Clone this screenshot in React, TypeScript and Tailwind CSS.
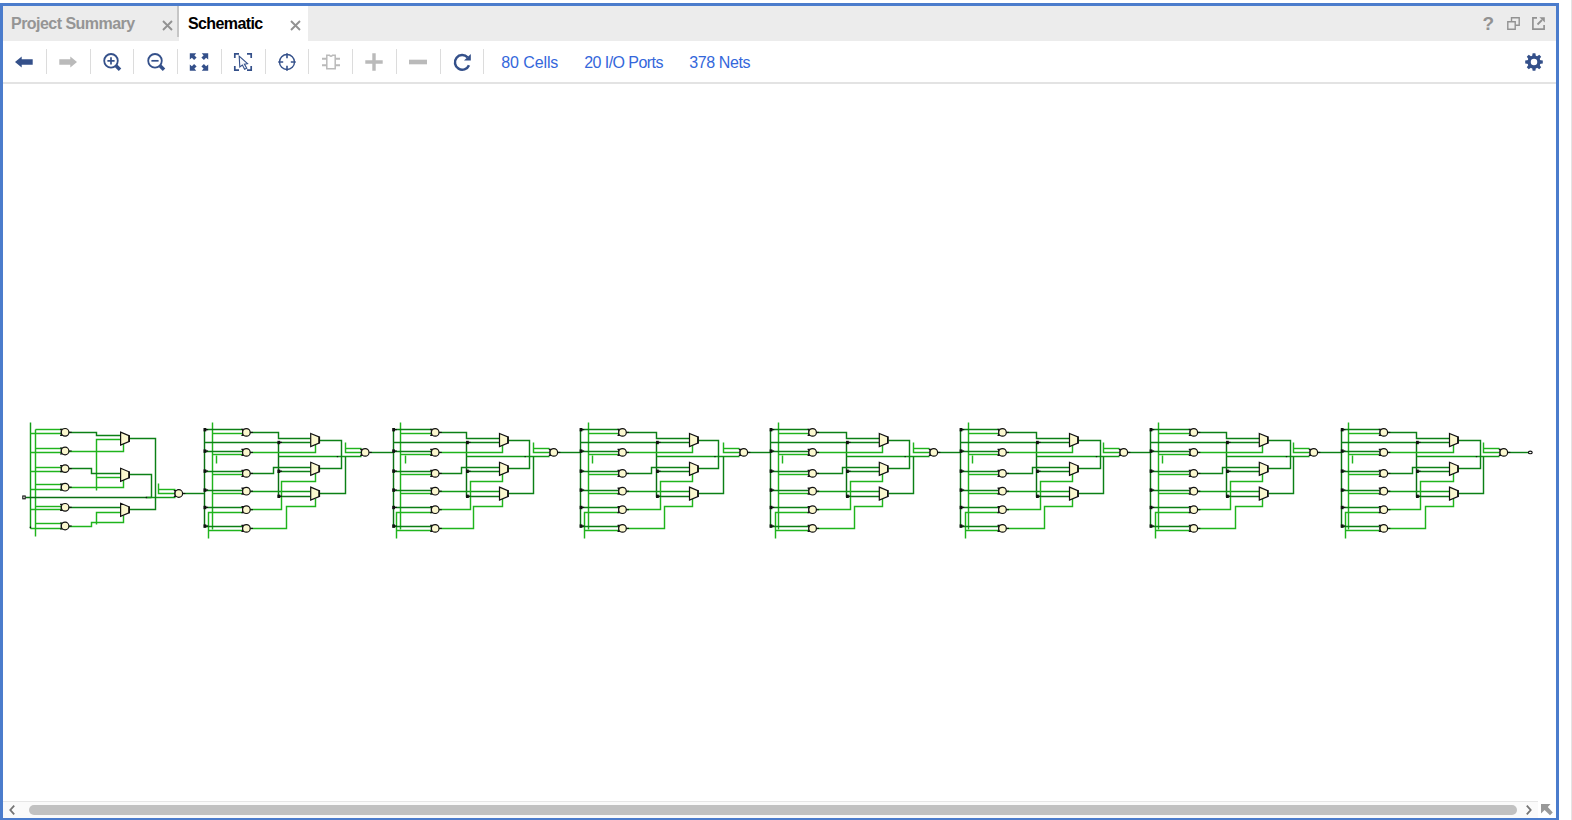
import React from "react";

const DEEP = "#0b7013";
const DARK = "#0c8016";
const MID = "#109a16";
const LITE = "#1fb41c";
const BLACK = "#111111";
const CREAM = "#fbf8cf";

type Point = [number, number];

const snap = (v: number) => Math.floor(v) + 0.5;

function Wire({ pts, color = MID, w = 1.45 }: { pts: Point[]; color?: string; w?: number }) {
  return (
    <polyline
      points={pts.map(([x, y]) => `${snap(x)},${snap(y)}`).join(" ")}
      fill="none"
      stroke={color}
      strokeWidth={w}
    />
  );
}

function Gate({ x, y, tail = true }: { x: number; y: number; tail?: boolean }) {
  return (
    <g stroke={BLACK}>
      <path d={`M${x - 5} ${y - 3}H${x - 2}M${x - 5} ${y + 3}H${x - 2}M${x - 3.8} ${y - 3}V${y + 3}`} strokeWidth="1.2" />
      <circle cx={x} cy={y} r="3.8" fill={CREAM} strokeWidth="1.2" />
      {tail && <path d={`M${x + 4} ${y}h2.6`} strokeWidth="1.1" />}
    </g>
  );
}

function Mux({ x, y }: { x: number; y: number }) {
  return (
    <g>
      <path
        d={`M${x} ${y - 6.5}L${x + 8.4} ${y - 3}V${y + 3}L${x} ${y + 6.5}Z`}
        fill={CREAM}
        stroke={BLACK}
        strokeWidth="1.2"
      />
      <path d={`M${x + 8.6} ${y - 3.4}V${y + 3.4}`} stroke={BLACK} strokeWidth="1.6" />
    </g>
  );
}

function Pin({ x, y }: { x: number; y: number }) {
  return (
    <g fill={BLACK}>
      <rect x={x - 0.4} y={y - 1.6} width="2.8" height="3.4" />
      <rect x={x + 2} y={y - 0.6} width="2.2" height="1.2" />
    </g>
  );
}

interface Stage {
  bus: number;
  rail: number;
  feed: number;
  tick: number;
  gate: number;
  mid: number;
  c3: number;
  c5: number;
  c6: number;
  mux: number;
  sel: number;
  out: number;
  stub: number;
  or: number;
}

const stages: Stage[] = [
  { bus: 204.3, rail: 212.4, feed: 208.7, tick: 216.3, gate: 246.4, mid: 278, c3: 273.7, c5: 281.3, c6: 286.6, mux: 310.4, sel: 315.3, out: 341.3, stub: 345.3, or: 365.2 },
  { bus: 393, rail: 400.3, feed: 396.6, tick: 405, gate: 435.2, mid: 466.6, c3: 461.6, c5: 470.3, c6: 473.7, mux: 499.2, sel: 502.6, out: 529, stub: 533.7, or: 553.8 },
  { bus: 580.4, rail: 588.6, feed: 584, tick: 592.4, gate: 622.5, mid: 656.6, c3: 651.6, c5: 660.3, c6: 664, mux: 689.2, sel: 692.6, out: 718.8, stub: 723.7, or: 743.8 },
  { bus: 770.4, rail: 778.6, feed: 775, tick: 782.6, gate: 812.6, mid: 846.6, c3: 842.6, c5: 850.3, c6: 854, mux: 879, sel: 882.6, out: 909, stub: 913.7, or: 933.8 },
  { bus: 960.4, rail: 968.6, feed: 965, tick: 972.4, gate: 1002.5, mid: 1036.6, c3: 1032.6, c5: 1040.3, c6: 1044, mux: 1069.2, sel: 1072.6, out: 1100.3, stub: 1103.7, or: 1123.8 },
  { bus: 1150.4, rail: 1158.6, feed: 1155, tick: 1162.6, gate: 1193.8, mid: 1226.6, c3: 1222.6, c5: 1230.3, c6: 1235.3, mux: 1259, sel: 1262.6, out: 1290.3, stub: 1293.7, or: 1313.8 },
  { bus: 1341.6, rail: 1348.6, feed: 1345, tick: 1352.4, gate: 1383.8, mid: 1416.6, c3: 1412.6, c5: 1420.3, c6: 1425.3, mux: 1449.2, sel: 1453.8, out: 1480.3, stub: 1483.7, or: 1503.8 },
];

function StageView({ s, next }: { s: Stage; next: number }) {
  const g = s.gate;
  return (
    <g>
      <Wire pts={[[s.bus, 429], [s.bus, 527]]} color={DEEP} />
      <Wire pts={[[s.rail, 422], [s.rail, 529]]} color={LITE} />
      <Wire pts={[[s.feed, 538], [s.feed, 512], [g - 4, 512]]} color={LITE} />
      <Wire pts={[[s.feed, 530], [g - 4, 530]]} color={LITE} />
      <Wire pts={[[s.tick, 455], [s.tick, 463]]} color={LITE} />
      {[429, 451, 471, 490, 507, 526].map((y) => (
        <Wire key={y} pts={[[s.bus, y], [g - 4, y]]} color={DARK} />
      ))}
      {[433, 454, 474, 493].map((y) => (
        <Wire key={y} pts={[[s.rail, y], [g - 4, y]]} color={LITE} />
      ))}
      <Wire pts={[[s.bus, 442], [s.mux, 442]]} color={DARK} />
      <Wire pts={[[g, 432], [s.mid, 432], [s.mid, 438], [s.mux, 438]]} color={DARK} />
      <Wire pts={[[s.mid, 442], [s.mid, 496], [s.mux, 496]]} color={DEEP} />
      <Wire pts={[[s.mid, 471], [s.mux, 471]]} color={DARK} />
      <Wire pts={[[g, 452], [s.sel, 452], [s.sel, 444]]} color={LITE} />
      <Wire pts={[[g, 473], [s.c3, 473], [s.c3, 467], [s.mux, 467]]} color={DARK} />
      <Wire pts={[[g, 491], [s.mux, 491]]} color={MID} />
      <Wire pts={[[g, 509], [s.c5, 509], [s.c5, 481], [s.sel, 481], [s.sel, 473]]} color={LITE} />
      <Wire pts={[[g, 528], [s.c6, 528], [s.c6, 506], [s.sel, 506], [s.sel, 498]]} color={LITE} />
      <Wire pts={[[s.mid, 456], [s.or - 4, 456]]} color={MID} />
      <Wire pts={[[s.mux + 9, 440], [s.out, 440], [s.out, 468], [s.mux + 9, 468]]} color={DARK} />
      <Wire pts={[[s.mux + 9, 493], [s.stub, 493], [s.stub, 456]]} color={DARK} />
      <Wire pts={[[s.stub, 442], [s.stub, 452], [s.or - 4, 452]]} color={LITE} />
      <Wire pts={[[s.stub, 448], [s.or - 4, 448]]} color={LITE} />
      <Wire pts={[[s.or + 4, 452], [next, 452]]} color={DARK} />
      {[429.6, 451, 471, 490, 507.4, 526].map((y) => (
        <Pin key={y} x={s.bus - 0.4} y={y} />
      ))}
      {[442.4, 471.2, 496.2].map((y) => (
        <Pin key={y} x={s.mid - 0.2} y={y} />
      ))}
      {[432.4, 452.4, 473.4, 491.2, 509.7, 528.4].map((y) => (
        <Gate key={y} x={g} y={y} />
      ))}
      {[440, 468.8, 493.6].map((y) => (
        <Mux key={y} x={s.mux + 0.3} y={y} />
      ))}
      <rect x={s.out - 4.5} y="456" width="1.4" height="1.2" fill={BLACK} />
      <Gate x={s.or} y={452.4} />
    </g>
  );
}

function FirstStage() {
  const rows = [432.3, 451, 468.6, 487.2, 507.3, 526];
  return (
    <g>
      <Wire pts={[[30, 422], [30, 528]]} color={MID} />
      <Wire pts={[[35, 429], [35, 536]]} color={LITE} />
      {[429, 448, 467, 484, 506, 523].map((y) => (
        <Wire key={y} pts={[[35, y], [62, y]]} color={LITE} />
      ))}
      {[433, 452, 471, 489, 509, 528].map((y) => (
        <Wire key={y} pts={[[30, y], [62, y]]} color={LITE} />
      ))}
      <Wire pts={[[65, 432], [96, 432], [96, 435.7], [121, 435.7]]} color={DARK} />
      <Wire pts={[[65, 451], [123, 451], [123, 443]]} color={LITE} />
      <Wire pts={[[121, 439], [96, 439], [96, 490]]} color={LITE} />
      <Wire pts={[[65, 468], [91, 468], [91, 473], [121, 473]]} color={DARK} />
      <Wire pts={[[96, 477], [121, 477]]} color={LITE} />
      <Wire pts={[[65, 487], [123, 487], [123, 479]]} color={LITE} />
      <Wire pts={[[65, 507], [121, 507]]} color={DARK} />
      <Wire pts={[[121, 512], [96, 512], [96, 524]]} color={LITE} />
      <Wire pts={[[65, 526], [91, 526], [91, 522], [123, 522], [123, 515]]} color={LITE} />
      <Wire pts={[[25, 497], [151, 497]]} color={DEEP} />
      <Wire pts={[[146, 497], [175, 497]]} color={MID} />
      <Wire pts={[[129, 438], [155, 438], [155, 509], [129, 509]]} color={DARK} />
      <Wire pts={[[129, 474], [151, 474], [151, 497]]} color={DARK} />
      <Wire pts={[[158, 483], [158, 493], [175, 493]]} color={LITE} />
      <Wire pts={[[158, 489], [175, 489]]} color={LITE} />
      <Wire pts={[[180, 493], [204, 493]]} color={DARK} />
      {rows.map((y) => (
        <Gate key={y} x={65.1} y={y} />
      ))}
      <Gate x={178.8} y={493.5} />
      {[438.6, 474.8, 509.8].map((y) => (
        <Mux key={y} x={120.6} y={y} />
      ))}
      <rect x="22.8" y="496" width="2.4" height="2.8" fill="#ffffff" stroke={BLACK} strokeWidth="1.1" />
      <rect x="145.7" y="496.8" width="1.4" height="1.4" fill={BLACK} />
      <circle cx="30.4" cy="527.4" r="0.8" fill={BLACK} />
    </g>
  );
}

function Schematic() {
  return (
    <svg className="block h-full w-full" viewBox="3 84 1553 717" preserveAspectRatio="none">
      <FirstStage />
      {stages.map((s, i) => (
        <StageView key={s.bus} s={s} next={i < stages.length - 1 ? stages[i + 1].bus : 1529} />
      ))}
      <ellipse cx="1530.3" cy="452.4" rx="1.9" ry="1.3" fill="#ffffff" stroke={BLACK} strokeWidth="1.1" />
    </svg>
  );
}

const NAVY = "#34508a";
const GREY = "#bababa";

function Icon({ children }: { children: React.ReactNode }) {
  return (
    <svg className="h-5 w-5" viewBox="-10 -10 20 20" fill="none">
      {children}
    </svg>
  );
}

const arrow = "M-9 0L-2.3-5.5V-2.7H8.7V2.7H-2.3V5.5Z";
const corner = "M2.4-4.4L4.6-6.6L2.8-8.8H9.2V-2.6L7.1-4.3L4.9-2.1Z";

const tools: React.ReactNode[] = [
  <path d={arrow} fill={NAVY} />,
  <path d={arrow} fill={GREY} transform="scale(-1 1)" />,
  <g stroke={NAVY}>
    <circle cx="-1" cy="-1.2" r="6.8" strokeWidth="1.8" />
    <path d="M-4.6-1.2H2.6M-1-4.8V2.4" strokeWidth="1.7" />
    <path d="M4 3.8L8 7.8" strokeWidth="3.5" />
  </g>,
  <g stroke={NAVY}>
    <circle cx="-1" cy="-1.2" r="6.8" strokeWidth="1.8" />
    <path d="M-4.6-1.2H2.6" strokeWidth="1.7" />
    <path d="M4 3.8L8 7.8" strokeWidth="3.5" />
  </g>,
  <g fill={NAVY}>
    <path d={corner} />
    <path d={corner} transform="scale(-1 1)" />
    <path d={corner} transform="scale(1 -1)" />
    <path d={corner} transform="scale(-1 -1)" />
  </g>,
  <g>
    <path
      d="M-8.2-4V-8.2H-4M4-8.2H8.2V-4M8.2 4V8.2H4M-4 8.2H-8.2V4"
      stroke={NAVY}
      strokeWidth="1.7"
    />
    <path d="M-3.8-5.8L4.5 1.7L1.4 2.1L3.8 6.2L1.6 7.3L-.6 3.1L-3.2 5Z" fill="#f6f8fc" stroke={NAVY} strokeWidth="1.1" />
  </g>,
  <g stroke={NAVY}>
    <circle r="7.5" strokeWidth="1.4" />
    <path d="M0-8.7V-3.8M0 8.7V3.8M-8.7 0H-3.8M8.7 0H3.8" strokeWidth="1.6" />
  </g>,
  <g stroke={GREY}>
    <path d="M-4.2-6.7H-1.5Q0-4.8 1.5-6.7H4.2V6.7H-4.2Z" strokeWidth="1.5" />
    <path d="M-9-3.3H-4M-9 3.3H-4M9-3.3H4M9 3.3H4" strokeWidth="2" />
  </g>,
  <path d="M-8.7 0H8.7M0-8.7V8.7" stroke={GREY} strokeWidth="3.4" />,
  <path d="M-9 0H9" stroke={GREY} strokeWidth="4.6" />,
  <g>
    <path d="M5.6-4.6A7.3 7.3 0 1 0 7 3.2" stroke={NAVY} strokeWidth="2.5" />
    <path d="M8.8-8.1V-1.5H2Z" fill={NAVY} />
  </g>,
];

function Close() {
  return (
    <svg className="h-[11px] w-[11px]" viewBox="0 0 11 11">
      <path d="M1 1L10 10M10 1L1 10" stroke="#929292" strokeWidth="1.9" />
    </svg>
  );
}

const teeth = [0, 45, 90, 135, 180, 225, 270, 315];

export default function App() {
  return (
    <div className="flex h-[820px] w-[1572px] overflow-hidden bg-white pt-[3px] font-['Liberation_Sans',Arial,sans-serif]">
      <div className="flex h-[817px] w-[1559px] flex-col border-t-[3px] border-r-[3px] border-b-2 border-l-[3px] border-[#4b7ccc] bg-white">
        <div className="flex h-[35px] shrink-0 bg-[#ececec]">
          <div className="flex w-[174px] items-start pl-2">
            <span className="w-[150.5px] pt-[7px] text-base leading-[22px] font-bold tracking-[-0.53px] whitespace-nowrap text-[#959595]">
              Project Summary
            </span>
            <div className="pt-[14px]">
              <Close />
            </div>
          </div>
          <div className="h-[31px] w-[2px] bg-[#c6c6c6]" />
          <div className="flex w-[129px] items-start bg-white pl-[9px]">
            <span className="w-[102px] pt-[7px] text-base leading-[22px] font-bold tracking-[-0.6px] text-black">
              Schematic
            </span>
            <div className="pt-[14px]">
              <Close />
            </div>
          </div>
          <div className="ml-auto flex items-center pr-[11px] text-[#929292]">
            <span className="mr-[13px] text-[19px] leading-5 font-bold">?</span>
            <svg className="mr-3 h-[13px] w-[13px]" viewBox="0 0 13 13" fill="none" stroke="currentColor" strokeWidth="1.4">
              <path d="M4.5 4.2V.8H12.2V8.2H8.5M.8 4.8H8.2V12.2H.8Z" />
            </svg>
            <svg className="h-[13px] w-[13px]" viewBox="0 0 13 13" fill="none" stroke="currentColor">
              <path d="M5 .9H.9V12.1H12.1V8" strokeWidth="1.7" />
              <path d="M5.5 7.5L10 3" strokeWidth="1.8" />
              <path d="M7.4 .2H12.8V5.6Z" fill="currentColor" stroke="none" />
            </svg>
          </div>
        </div>

        <div className="flex h-[43px] shrink-0 items-center border-b-2 border-[#e3e3e3] bg-white">
          <div className="flex">
            {tools.map((t, i) => (
              <div key={i} className="flex h-[25px] w-[43.75px] items-center justify-center border-r border-[#dcdcdc]">
                <Icon>{t}</Icon>
              </div>
            ))}
          </div>
          <div className="flex pt-[2px] pl-[17px] text-base leading-5 whitespace-nowrap text-[#3467db]">
            <span className="w-[83px] tracking-[-0.1px]">80 Cells</span>
            <span className="w-[105px] tracking-[-0.56px]">20 I/O Ports</span>
            <span className="tracking-[-0.4px]">378 Nets</span>
          </div>
          <div className="mr-[12px] ml-auto">
            <Icon>
              {teeth.map((a) => (
                <path key={a} d="M-1.9-5.4L-1.4-8.8H1.4L1.9-5.4Z" fill={NAVY} transform={`rotate(${a})`} />
              ))}
              <circle r="4.9" stroke={NAVY} strokeWidth="3.3" />
            </Icon>
          </div>
        </div>

        <div className="h-[717px] shrink-0">
          <Schematic />
        </div>

        <div className="flex h-[17px] shrink-0">
          <div className="flex w-[1535px] items-center border-t border-[#e6e6e6] bg-[#fafafa]">
            <svg className="ml-[6px] h-[10px] w-[6px]" viewBox="0 0 6 10" fill="none">
              <path d="M5.2 .6L1.3 5L5.2 9.4" stroke="#747474" strokeWidth="1.8" />
            </svg>
            <div className="ml-[14px] h-[10px] w-[1488px] rounded-full bg-[#c1c1c1]" />
            <svg className="ml-[9px] h-[10px] w-[6px]" viewBox="0 0 6 10" fill="none">
              <path d="M.8 .6L4.7 5L.8 9.4" stroke="#747474" strokeWidth="1.8" />
            </svg>
          </div>
          <svg className="mt-[3px] ml-[3px] h-[12px] w-[12px]" viewBox="0 0 12 12">
            <path d="M0 0H9.5L6.8 3L11.8 8.5L9 11.3L3.6 6L0 9.5Z" fill="#999999" />
          </svg>
        </div>
      </div>
      <div className="-mt-[3px] ml-auto h-[820px] w-px bg-[#e4e4e4]" />
    </div>
  );
}
